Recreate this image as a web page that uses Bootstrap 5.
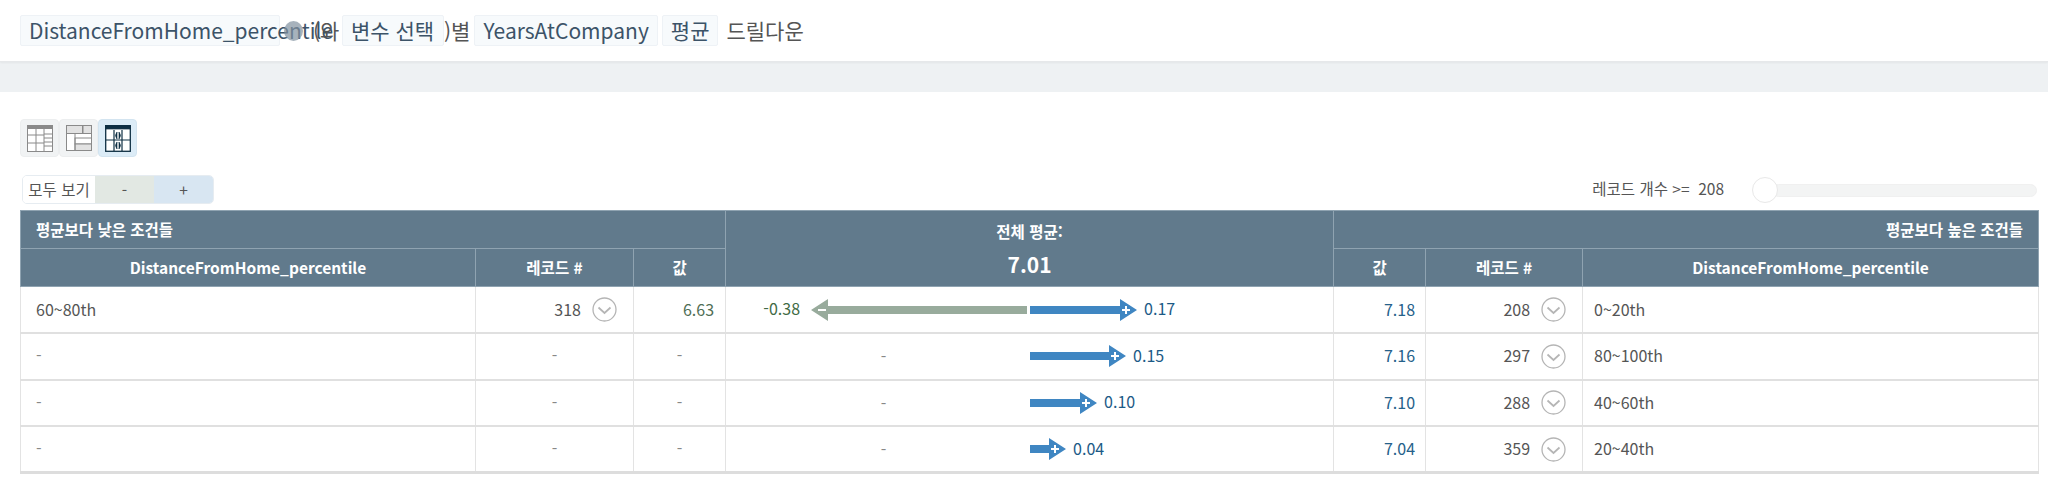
<!DOCTYPE html>
<html lang="ko">
<head>
    <meta charset="UTF-8">
    <meta name="viewport" content="width=device-width, initial-scale=1.0">
    <title>드릴다운</title>
    <link href="https://cdn.jsdelivr.net/npm/bootstrap@5.3.0/dist/css/bootstrap.min.css" rel="stylesheet">
    <style>
        body { font-family: "Noto Sans CJK KR", "Noto Sans", sans-serif; color: #555; background: #fff; overflow: hidden; }
        .top-title { height: 62px; padding-left: 20px; font-size: 21px; border-bottom: 1px solid #e6e8ea; box-shadow: 0 1px 2px rgba(0,0,0,.05); position: relative; color: #555; }
        .chip { height: 31px; line-height: 28px; padding: 0 8px; background: #f7fafc; border: 1px solid #eef2f6; color: #3c5368; white-space: nowrap; border-radius: 2px; }
        .chip-fixed { width: 260px; }
        .chip-var { width: 102px; }
        .chip-x { position: absolute; left: 284px; top: 21px; width: 19px; height: 20px; border-radius: 50%; background: rgba(130,145,160,.7); }
        .txt-ee { margin-left: 33px; width: 29px; white-space: nowrap; }
        .gray-band { height: 30px; background: #eef1f3; }
        .page-body { padding: 27px 10px 0 20px; }
        .view-btn { width: 39px; height: 38px; padding: 0; background: #f1f3f4; border: 1px solid #eceeef; border-radius: 4px; }
        .view-btn.on { background: #dcecf7; border-color: #d3e4f0; }
        .tool-row { height: 30px; margin-top: 17px; margin-bottom: 6px; padding-left: 2px; }
        .expand-group { height: 29px; border: 1px solid #e6ecf1; border-radius: 5px; overflow: hidden; }
        .expand-group .btn { padding: 0; font-size: 15.5px; line-height: 27px; border: 0; border-radius: 0; color: #555; }
        .btn-all { width: 72px; background: #fff; white-space: nowrap; }
        .btn-minus { width: 59px; background: #e2e8e3; }
        .btn-plus { width: 59px; background: #d8e6f2; }
        .rec-label { font-size: 15.5px; margin-right: 28px; white-space: pre; }
        .rec-slider { width: 285px; height: 26px; margin-right: 1px; margin-top: 2px; }
        .rec-track { top: 7px; left: 20px; right: 0; height: 13px; background: #f3f4f4; border: 1px solid #f0f0f0; border-radius: 7px; position: absolute; }
        .rec-thumb { position: absolute; left: 0; top: 0; width: 26px; height: 26px; border-radius: 50%; background: #fff; border: 1px solid #e8e8e8; }
        .dd-table { table-layout: fixed; width: 2018px; font-size: 16px; margin: 0; border-collapse: collapse; --bs-table-bg: #fff; --bs-table-color: #555; border-bottom: 3px solid #ddd; }
        .dd-table td, .dd-table th { padding: 0 15px; border: 1px solid #e3e3e3; vertical-align: middle; }
        .dd-table tbody tr { height: 46.5px; }
        .dd-table tbody tr td { border-bottom: 2px solid #e0e0e0; padding-bottom: 2px; }
        .dd-table thead th { --bs-table-bg: #617a8c; --bs-table-color: #fff; color: #fff; background-color: #617a8c; border-color: #8fa3b1; font-size: 15.5px; font-weight: 700; }
        .head-a { height: 38px; }
        .head-b { height: 38px; }
        .avg-val { font-size: 21px; margin-top: 8px; line-height: 26px; }
        .cl-a { width: 455px; } .cl-b { width: 158px; } .cl-c { width: 92px; } .cl-d { width: 608px; }
        .cl-e { width: 92px; } .cl-f { width: 157px; } .cl-g { width: 456px; }
        .dd-table td.val-low { color: #4f6e55; padding-right: 11px; }
        .dd-table td.val-high { color: #25618a; padding-right: 10px; }
        .lbl-low { color: #3f6b45; margin-right: 11px; margin-bottom: 3px; }
        .lbl-high { color: #1c5a86; margin-left: 7px; margin-bottom: 3px; }
        .dd-table .no-val { color: #888; }
        .dd-table td.cond-right { padding-left: 11px; }
        .dd-table tbody tr td.bar-cell { padding: 0; }
        .bar-left { flex: 0 0 301px; }
        .bar-empty { padding-left: 14px; }
        .bar-right { flex: 1 1 0; padding-left: 3px; }
        .chev { width: 25px; height: 25px; margin-left: 11px; margin-top: 2px; flex: none; }
        .dd-table tbody tr td.rec-cell { padding-right: 16px; }
    </style>
</head>
<body>
    <div class="top-title d-flex align-items-center">
        <span class="chip chip-fixed">DistanceFromHome_percentile</span>
        <span class="chip-x"></span>
        <span class="txt-ee">(와</span>
        <span class="chip chip-var">변수 선택</span>
        <span>)별</span>
        <span class="chip ms-1">YearsAtCompany</span>
        <span class="chip ms-1">평균</span>
        <span class="ms-2">드릴다운</span>
    </div>
    <div class="gray-band"></div>

    <div class="page-body">
        <div class="d-flex">
            <button class="btn view-btn d-flex align-items-center justify-content-center">
                <svg width="26" height="27" viewBox="0 0 26 27" fill="#fff" stroke="#8a8a8a"><rect x=".5" y=".5" width="25" height="26"/><rect x=".5" y=".5" width="25" height="3" fill="#8a8a8a"/><path d="M9 4v22M17 4v22M17 9h8M17 13h8M17 17h8M17 21h8M1 10h16M1 18h16"/></svg>
            </button>
            <button class="btn view-btn d-flex align-items-center justify-content-center">
                <svg width="26" height="26" viewBox="0 0 26 26" fill="#e2e2e2" stroke="#8a8a8a"><rect x=".5" y=".5" width="25" height="25" fill="#fff"/><rect x=".5" y=".5" width="16" height="8"/><rect x="17" y=".5" width="8.500" height="8"/><rect x="9" y="13" width="16.500" height="6" fill="#fff"/><rect x="9" y="19" width="16.500" height="6.500"/><path d="M9 9v17"/></svg>
            </button>
            <button class="btn view-btn on d-flex align-items-center justify-content-center">
                <svg width="26" height="27" viewBox="0 0 26 27" fill="#fff" stroke="#0f3044" stroke-width="1.300"><rect x=".7" y=".7" width="24.600" height="25.600"/><rect x=".7" y=".7" width="24.600" height="3" fill="#0f3044"/><path d="M1 15h24M9 5v21M17 5v21" stroke-width="1.200"/><path d="M12 7q-3 3.500 0 7zM14 7q3 3.500 0 7zM12 17q-3 3.500 0 7zM14 17q3 3.500 0 7z" fill="#0f3044" stroke-width=".6"/></svg>
            </button>
        </div>

        <div class="tool-row d-flex align-items-center justify-content-between">
            <div class="expand-group d-flex">
                <button class="btn btn-all">모두 보기</button>
                <button class="btn btn-minus">-</button>
                <button class="btn btn-plus">+</button>
            </div>
            <div class="d-flex align-items-center">
                <span class="rec-label">레코드 개수 &gt;=  208</span>
                <div class="rec-slider position-relative">
                    <div class="rec-track"></div>
                    <div class="rec-thumb"></div>
                </div>
            </div>
        </div>

        <table class="table dd-table">
            <colgroup>
                <col class="cl-a"><col class="cl-b"><col class="cl-c"><col class="cl-d"><col class="cl-e"><col class="cl-f"><col class="cl-g">
            </colgroup>
            <thead>
                <tr class="head-a">
                    <th colspan="3">평균보다 낮은 조건들</th>
                    <th rowspan="2" class="text-center">전체 평균:<div class="avg-val">7.01</div></th>
                    <th colspan="3" class="text-end">평균보다 높은 조건들</th>
                </tr>
                <tr class="head-b">
                    <th class="text-center">DistanceFromHome_percentile</th>
                    <th class="text-center">레코드 #</th>
                    <th class="text-center">값</th>
                    <th class="text-center">값</th>
                    <th class="text-center">레코드 #</th>
                    <th class="text-center">DistanceFromHome_percentile</th>
                </tr>
            </thead>
            <tbody>
                <tr>
                    <td>60~80th</td>
                    <td class="rec-cell"><div class="d-flex align-items-center justify-content-end">318<svg class="chev" viewBox="0 0 25 25" fill="none" stroke="#b5b5b5"><circle cx="12.500" cy="12.500" r="11.500" stroke-width="1.300"/><path d="M6.500 10.500l6 5.500 6-5.500" stroke-width="1.700"/></svg></div></td>
                    <td class="text-end val-low">6.63</td>
                    <td class="bar-cell">
                        <div class="d-flex align-items-center">
                            <div class="bar-left d-flex align-items-center justify-content-end">
                                <span class="lbl-low">-0.38</span>
                                <svg width="216" height="22" viewBox="0 0 216 22"><polygon points="216,7 17,7 17,0 0,11 17,22 17,15 216,15" fill="#98ab9c"/><path d="M7 11h8" stroke="#fff" stroke-width="2"/></svg>
                            </div>
                            <div class="bar-right d-flex align-items-center">
                                <svg width="107" height="22" viewBox="0 0 107 22"><polygon points="0,7 90,7 90,0 107,11 90,22 90,15 0,15" fill="#3f86c2"/><path d="M92 11h8M96 7v8" stroke="#fff" stroke-width="2"/></svg>
                                <span class="lbl-high">0.17</span>
                            </div>
                        </div>
                    </td>
                    <td class="text-end val-high">7.18</td>
                    <td class="rec-cell"><div class="d-flex align-items-center justify-content-end">208<svg class="chev" viewBox="0 0 25 25" fill="none" stroke="#b5b5b5"><circle cx="12.500" cy="12.500" r="11.500" stroke-width="1.300"/><path d="M6.500 10.500l6 5.500 6-5.500" stroke-width="1.700"/></svg></div></td>
                    <td class="cond-right">0~20th</td>
                </tr>
                <tr>
                    <td class="no-val">-</td>
                    <td class="text-center no-val">-</td>
                    <td class="text-center no-val">-</td>
                    <td class="bar-cell">
                        <div class="d-flex align-items-center">
                            <div class="bar-left bar-empty text-center no-val">-</div>
                            <div class="bar-right d-flex align-items-center">
                                <svg width="96" height="22" viewBox="0 0 96 22"><polygon points="0,7 79,7 79,0 96,11 79,22 79,15 0,15" fill="#3f86c2"/><path d="M81 11h8M85 7v8" stroke="#fff" stroke-width="2"/></svg>
                                <span class="lbl-high">0.15</span>
                            </div>
                        </div>
                    </td>
                    <td class="text-end val-high">7.16</td>
                    <td class="rec-cell"><div class="d-flex align-items-center justify-content-end">297<svg class="chev" viewBox="0 0 25 25" fill="none" stroke="#b5b5b5"><circle cx="12.500" cy="12.500" r="11.500" stroke-width="1.300"/><path d="M6.500 10.500l6 5.500 6-5.500" stroke-width="1.700"/></svg></div></td>
                    <td class="cond-right">80~100th</td>
                </tr>
                <tr>
                    <td class="no-val">-</td>
                    <td class="text-center no-val">-</td>
                    <td class="text-center no-val">-</td>
                    <td class="bar-cell">
                        <div class="d-flex align-items-center">
                            <div class="bar-left bar-empty text-center no-val">-</div>
                            <div class="bar-right d-flex align-items-center">
                                <svg width="67" height="22" viewBox="0 0 67 22"><polygon points="0,7 50,7 50,0 67,11 50,22 50,15 0,15" fill="#3f86c2"/><path d="M52 11h8M56 7v8" stroke="#fff" stroke-width="2"/></svg>
                                <span class="lbl-high">0.10</span>
                            </div>
                        </div>
                    </td>
                    <td class="text-end val-high">7.10</td>
                    <td class="rec-cell"><div class="d-flex align-items-center justify-content-end">288<svg class="chev" viewBox="0 0 25 25" fill="none" stroke="#b5b5b5"><circle cx="12.500" cy="12.500" r="11.500" stroke-width="1.300"/><path d="M6.500 10.500l6 5.500 6-5.500" stroke-width="1.700"/></svg></div></td>
                    <td class="cond-right">40~60th</td>
                </tr>
                <tr>
                    <td class="no-val">-</td>
                    <td class="text-center no-val">-</td>
                    <td class="text-center no-val">-</td>
                    <td class="bar-cell">
                        <div class="d-flex align-items-center">
                            <div class="bar-left bar-empty text-center no-val">-</div>
                            <div class="bar-right d-flex align-items-center">
                                <svg width="36" height="22" viewBox="0 0 36 22"><polygon points="0,7 19,7 19,0 36,11 19,22 19,15 0,15" fill="#3f86c2"/><path d="M21 11h8M25 7v8" stroke="#fff" stroke-width="2"/></svg>
                                <span class="lbl-high">0.04</span>
                            </div>
                        </div>
                    </td>
                    <td class="text-end val-high">7.04</td>
                    <td class="rec-cell"><div class="d-flex align-items-center justify-content-end">359<svg class="chev" viewBox="0 0 25 25" fill="none" stroke="#b5b5b5"><circle cx="12.500" cy="12.500" r="11.500" stroke-width="1.300"/><path d="M6.500 10.500l6 5.500 6-5.500" stroke-width="1.700"/></svg></div></td>
                    <td class="cond-right">20~40th</td>
                </tr>
            </tbody>
        </table>
    </div>

    <script src="https://cdn.jsdelivr.net/npm/bootstrap@5.3.0/dist/js/bootstrap.bundle.min.js"></script>
</body>
</html>
